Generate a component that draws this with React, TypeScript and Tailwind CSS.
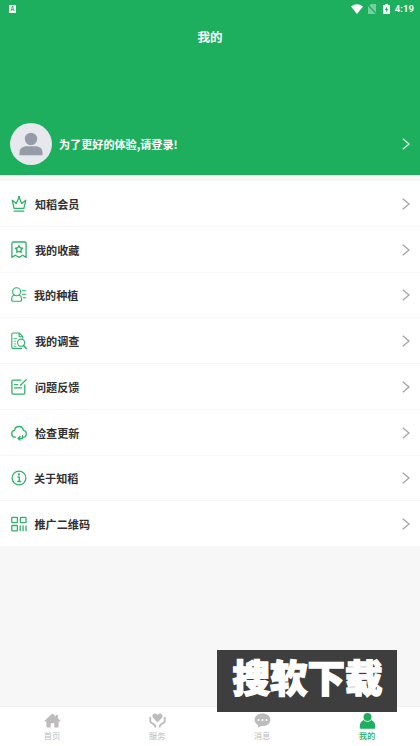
import type { ReactNode } from "react";

interface MenuItem {
  label: string;
  icon: ReactNode;
  offset: string;
}

interface TabItem {
  label: string;
  icon: ReactNode;
  active?: boolean;
}

function LineIcon({ children }: { children: ReactNode }) {
  return (
    <svg
      viewBox="0 0 16 18"
      className="h-[18px] w-4 shrink-0"
      fill="none"
      stroke="#2fb269"
      strokeWidth="1.3"
      strokeLinecap="round"
      strokeLinejoin="round"
    >
      {children}
    </svg>
  );
}

const menuItems: MenuItem[] = [
  {
    label: "知稻会员",
    offset: "pl-[8.5px]",
    icon: (
      <LineIcon>
        <path d="M3.1 13.4 1.2 5.2 5.3 8.4 8 2.2l2.7 6.2 4.1-3.2-1.9 8.2ZM3.2 16.2h9.6" />
        <circle cx="8" cy="1.8" r=".4" />
      </LineIcon>
    ),
  },
  {
    label: "我的收藏",
    offset: "pl-[8.5px]",
    icon: (
      <LineIcon>
        <path d="M.9 16.4V2.5Q.9 1 2.4 1h11.2q1.5 0 1.5 1.5v13.9L11.7 14.2 8 16.4l-3.7-2.2Z" />
        <path d="m8 4.8 1.2 1.9 2.3.5-1.5 1.7.2 2.3L8 10.4l-2.2.8.2-2.3-1.5-1.7 2.3-.5Z" strokeWidth="1.4" />
      </LineIcon>
    ),
  },
  {
    label: "我的种植",
    offset: "pl-[7.5px]",
    icon: (
      <LineIcon>
        <g strokeWidth="1.1">
          <circle cx="5.6" cy="5.8" r="4" />
          <path d="M3 8.8C1.1 9.8.6 11 .6 13.2q0 2.1 1.9 2.1h6.3q1.9 0 1.9-2.1c0-2.2-.8-3.4-2.6-4.4" />
          <path d="M11.2 4.7h3.6M11.2 8.2h3.6M12.2 11.7h2.6" />
        </g>
      </LineIcon>
    ),
  },
  {
    label: "我的调查",
    offset: "pl-[8.5px]",
    icon: (
      <LineIcon>
        <g strokeWidth="1.1">
          <path d="M10.5 16.4H2.2q-1.4 0-1.4-1.4V2.4Q.8 1 2.2 1h5.9l3.7 3.7v1.5M8.1 1v3.8h3.7" />
          <path d="M3 6.5h2.5M3 9.2h1.7M3 11.9h1.7M3 14.3h2" strokeWidth=".8" />
          <circle cx="10.1" cy="10.7" r="3.6" />
          <path d="m12.6 13.4 2.7 3" strokeWidth="1.5" />
        </g>
      </LineIcon>
    ),
  },
  {
    label: "问题反馈",
    offset: "pl-[8.5px]",
    icon: (
      <LineIcon>
        <path d="M9.8 2.2H2.2Q.9 2.2.9 3.5v11.3q0 1.3 1.3 1.3h10.3q1.3 0 1.3-1.3V7" />
        <path d="M15.2 1.6 9.5 7.3M3.5 6.6h3.3M3.5 9.8h7.1" />
      </LineIcon>
    ),
  },
  {
    label: "检查更新",
    offset: "pl-[8.5px]",
    icon: (
      <LineIcon>
        <path d="M4.5 13.2C2 13.2.7 11.5.7 9.7c0-1.9 1.3-3.2 2.9-3.4C3.9 3.9 5.6 2.5 8 2.5s4 1.5 4.4 3.8c1.7.2 2.9 1.6 2.9 3.4 0 2-1.3 3.5-3.4 3.5" />
        <path d="M11.4 11.6v2.9H7.3M9 12.5l-2 2 2 1.6" />
      </LineIcon>
    ),
  },
  {
    label: "关于知稻",
    offset: "pl-[7.5px]",
    icon: (
      <LineIcon>
        <circle cx="8" cy="9" r="6.9" />
        <path d="M7 8h1.2v4.4M6.7 12.5h3" />
        <circle cx="8" cy="5.4" r=".5" fill="#2fb269" />
      </LineIcon>
    ),
  },
  {
    label: "推广二维码",
    offset: "pl-2",
    icon: (
      <LineIcon>
        <rect x=".8" y="2.3" width="5.6" height="5.4" rx=".7" />
        <rect x="9.4" y="2.3" width="5.6" height="5.4" rx=".7" />
        <rect x=".8" y="10.5" width="5.6" height="5.4" rx=".7" />
        <path d="M9.2 10.8v4.9M12.1 10.8v4.9M15 10.8v4.9" />
      </LineIcon>
    ),
  },
];

const tabs: TabItem[] = [
  {
    label: "首页",
    icon: <path d="M9 .5.5 8.3q-.4.7.5.7h1.5v5.4q0 1.1 1.1 1.1h3.5v-4.7h3.8v4.7h3.5q1.1 0 1.1-1.1V9H17q.9 0 .5-.7l-2.8-2.6V2.2h-2.2v1.4Z" />,
  },
  {
    label: "服务",
    icon: (
      <>
        <path d="M9 10 4.4 5.4C2.7 3.2 4.1.6 6.2.6 7.7.6 8.5 1.4 9 2.2c.5-.8 1.3-1.6 2.8-1.6 2.1 0 3.5 2.6 1.8 4.8Z" />
        <path d="M1.3 5v3.4q0 1 .8 1.6l3.6 2.6q.9.7.9 1.9M16.7 5v3.4q0 1-.8 1.6l-3.6 2.6q-.9.7-.9 1.9" fill="none" stroke="currentColor" strokeWidth="2" strokeLinecap="round" strokeLinejoin="round" />
      </>
    ),
  },
  {
    label: "消息",
    icon: (
      <>
        <path d="M9 .5C4.2.5.6 3.4.6 7.1c0 2.5 1.4 4.4 3.5 5.6v3.1l3.3-2.1c6 .7 10-2.4 10-6.6C17.4 3.4 13.8.5 9 .5Z" />
        <g fill="#fff">
          <circle cx="4.8" cy="7.4" r="1.1" />
          <circle cx="9" cy="7.4" r="1.1" />
          <circle cx="13.2" cy="7.4" r="1.1" />
        </g>
      </>
    ),
  },
  {
    label: "我的",
    active: true,
    icon: (
      <>
        <circle cx="9" cy="4.2" r="4.2" />
        <path d="M5 7.5C2.6 8.4.8 10.7.8 14v1.6q0 1.1 1.1 1.1h14.2q1.1 0 1.1-1.1V14c0-3.3-1.8-5.6-4.2-6.5C11 10.1 7 10.1 5 7.5Z" />
      </>
    ),
  },
];

function Chevron({ className }: { className: string }) {
  return (
    <svg viewBox="0 0 8 12" className={`h-3 w-2 shrink-0 ${className}`} fill="none" stroke="currentColor" strokeWidth="1.3">
      <path d="m.8.7 6.2 5.3-6.2 5.3" />
    </svg>
  );
}

function StatusBar() {
  return (
    <div className="flex h-[17px] items-center justify-between pl-[9px] pr-[6px]">
      <span className="flex h-2 w-[7px] items-center justify-center bg-white text-[6px] font-bold leading-none text-[#1eaf5e]">
        A
      </span>
      <div className="flex items-center text-white">
        <svg viewBox="0 0 12 10" className="mr-[5px] h-[10px] w-3" fill="currentColor">
          <path d="M0 2.4Q6-2 12 2.4L6 10Z" />
        </svg>
        <svg viewBox="0 0 8 10" className="mr-[7px] h-[10px] w-2 opacity-40">
          <path d="M3 0h5v10H0V3Z" fill="currentColor" />
          <path d="m0 1 8 8.5" stroke="#1eaf5e" strokeWidth="1.2" />
        </svg>
        <svg viewBox="0 0 7 10" className="mr-[5px] h-[10px] w-[7px]">
          <path d="M2 0h3v1h2v9H0V1h2Z" fill="currentColor" />
          <path d="M4.2 2.2 1.8 6h1.4v2.4L5.4 5H4Z" fill="#1eaf5e" />
        </svg>
        <span className="font-[Roboto,sans-serif] text-[9.5px] font-semibold leading-none tracking-[0.1px]">4:19</span>
      </div>
    </div>
  );
}

export default function App() {
  return (
    <div className="relative flex h-[746px] w-[420px] flex-col overflow-hidden bg-[#f7f7f7] font-['Noto_Sans_CJK_SC',sans-serif]">
      <header className="flex h-[175px] shrink-0 flex-col bg-[#1eaf5e] text-white">
        <StatusBar />
        <h1 className="pt-[11px] text-center text-[12.5px] font-bold leading-[18px]">我的</h1>
        <div className="mt-auto mb-[10px] flex h-[42px] items-center pl-[10px] pr-[10px]">
          <div className="h-[42px] w-[42px] overflow-hidden rounded-full bg-[#e5e8ed]">
            <svg viewBox="0 0 42 42" className="h-full w-full" fill="#969ca7">
              <circle cx="21" cy="16" r="6.2" />
              <path d="M9.5 32.3v-2.8c0-4.2 3.2-6.3 7.3-6.3h8.4c4.1 0 7.3 2.1 7.3 6.3v2.8Z" />
            </svg>
          </div>
          <span className="ml-[7px] flex-1 text-[11.1px] font-bold leading-4">为了更好的体验,请登录!</span>
          <Chevron className="text-white/80" />
        </div>
      </header>

      <main className="mt-[6px] flex h-[365px] shrink-0 flex-col divide-y divide-[#f7f7f7] bg-white">
        {menuItems.map((item) => (
          <div key={item.label} className="flex flex-1 items-center pl-[10.5px] pr-[10px] pt-px">
            {item.icon}
            <span className={`flex-1 text-[11.1px] font-bold leading-4 text-[#303030] ${item.offset}`}>
              {item.label}
            </span>
            <Chevron className="text-[#a5a5a5]" />
          </div>
        ))}
      </main>

      <nav className="mt-auto grid h-10 shrink-0 grid-cols-4 border-t border-[#efefef] bg-white">
        {tabs.map((tab) => (
          <div
            key={tab.label}
            className={`flex flex-col items-center pr-px pt-[6px] ${tab.active ? "text-[#1eaf5e]" : "text-[#bcbcbc]"}`}
          >
            <svg viewBox="0 0 18 17" className="h-4 w-[17px]" fill="currentColor">
              {tab.icon}
            </svg>
            <span className={`text-[8.4px] leading-[13px] ${tab.active ? "font-medium" : ""}`}>{tab.label}</span>
          </div>
        ))}
      </nav>

      <div className="absolute left-[217px] top-[650px] flex h-[62px] w-[180px] items-center justify-center bg-[#3e3e3e] pb-[11px] pl-px text-[37.5px] font-black leading-none text-white [-webkit-text-stroke:1.4px_white]">
        搜软下载
      </div>
    </div>
  );
}
